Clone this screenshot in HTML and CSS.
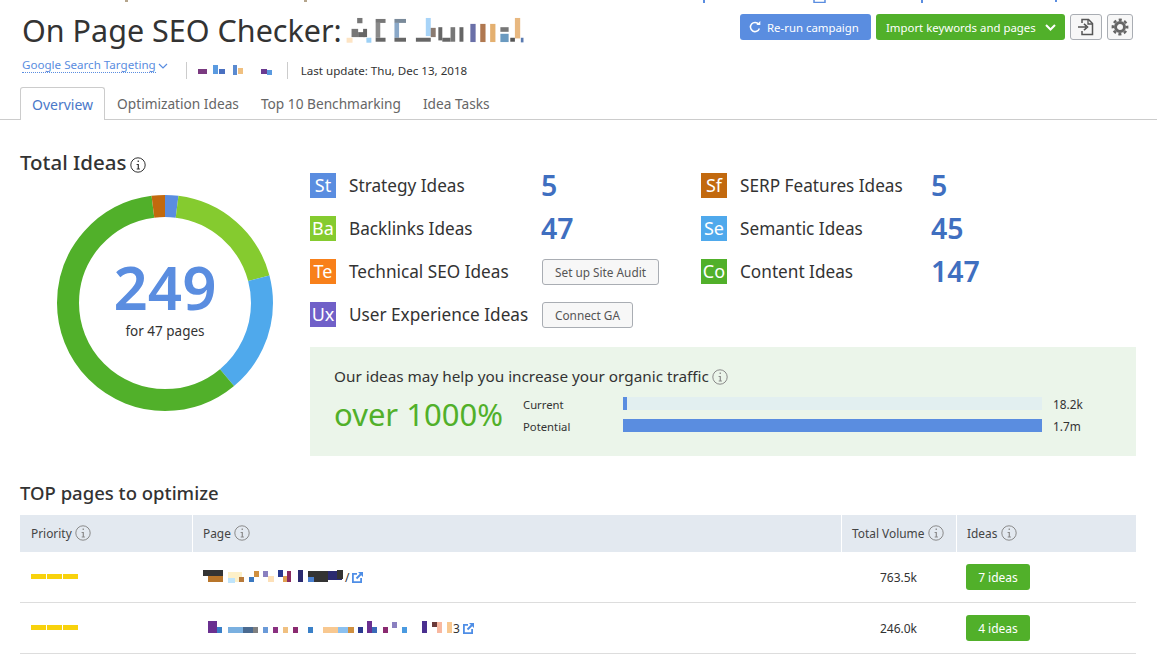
FILE: index.html
```html
<html>

<head>
    <link rel="stylesheet" href="styles.css">
</head>

<body>
    <svg class="hidden-defs">
        <symbol id="info" viewBox="0 0 16 16">
            <circle cx="8" cy="8" r="7.2" fill="none" stroke="currentColor" stroke-width="1"></circle>
            <path d="M7.6 3.6h1.3v1.5H7.6zM6.6 7h2.3v4.6h1v.9H6.7v-.9h1V7.9H6.6z" fill="currentColor"></path>
        </symbol>
        <symbol id="ext" viewBox="0 0 11 11">
            <path d="M0 1h5v1.8H1.8v6.4h6.4V6H10v5H0z" fill="#4f8ee6"></path>
            <path d="M6 0h5v5L9.200 3.200 5.200 7.200 3.800 5.800 7.800 1.800z" fill="#4f8ee6"></path>
        </symbol>
    </svg>

    <svg class="top-strip" width="1157" height="3">
        <rect x="125" y="0" width="3" height="2" fill="#b5a58c"></rect>
        <rect x="304" y="0" width="3" height="2" fill="#b5a58c"></rect>
        <rect x="703" y="0" width="2" height="3" fill="#5a8de0"></rect>
        <path d="M814 0v2.500h11V0" fill="none" stroke="#5a8de0" stroke-width="1.500"></path>
        <rect x="921" y="0" width="2" height="3" fill="#5a8de0"></rect>
        <rect x="1055" y="0" width="2" height="2" fill="#5a8de0"></rect>
    </svg>

    <header class="page-head">
        <div class="title-block">
            <h1 class="title">
                On Page SEO Checker:
                <svg class="blur title-blur" viewBox="0 0 600 100" width="200" height="33">
                    <rect x="52" y="12" width="16" height="16" fill="#777"></rect>
                    <rect x="35" y="45" width="20" height="25" fill="#777"></rect>
                    <rect x="55" y="55" width="20" height="15" fill="#666"></rect>
                    <rect x="70" y="45" width="12" height="25" fill="#666"></rect>
                    <rect x="20" y="72" width="18" height="15" fill="#fde4c4"></rect>
                    <rect x="80" y="72" width="15" height="15" fill="#9cd0f5"></rect>
                    <rect x="108" y="15" width="30" height="12" fill="#777"></rect>
                    <rect x="108" y="27" width="14" height="45" fill="#8a8a8a"></rect>
                    <rect x="108" y="72" width="30" height="12" fill="#666"></rect>
                    <rect x="165" y="15" width="35" height="12" fill="#7a8a9a"></rect>
                    <rect x="165" y="27" width="14" height="45" fill="#8aa8c8"></rect>
                    <rect x="165" y="72" width="35" height="12" fill="#666"></rect>
                    <rect x="260" y="12" width="15" height="55" fill="#a8d4f8"></rect>
                    <rect x="230" y="72" width="45" height="12" fill="#666"></rect>
                    <rect x="275" y="42" width="15" height="28" fill="#8a7a70"></rect>
                    <rect x="298" y="40" width="12" height="40" fill="#666"></rect>
                    <rect x="310" y="72" width="25" height="12" fill="#666"></rect>
                    <rect x="335" y="40" width="14" height="44" fill="#777"></rect>
                    <rect x="362" y="40" width="12" height="44" fill="#666"></rect>
                    <rect x="395" y="30" width="16" height="55" fill="#6a70a8"></rect>
                    <rect x="425" y="30" width="16" height="55" fill="#b07850"></rect>
                    <rect x="455" y="30" width="16" height="55" fill="#e4b070"></rect>
                    <rect x="486" y="40" width="25" height="14" fill="#777"></rect>
                    <rect x="486" y="60" width="25" height="25" fill="#6a9ac0"></rect>
                    <rect x="530" y="12" width="16" height="62" fill="#e8b880"></rect>
                    <rect x="516" y="72" width="14" height="12" fill="#555"></rect>
                    <rect x="548" y="72" width="8" height="14" fill="#5a7ab0"></rect>
                </svg>
            </h1>
            <div class="meta">
                <a class="targeting">Google Search Targeting</a>
                <svg class="targeting-arrow" width="10" height="6" viewBox="0 0 10 6"><path d="M1 1l4 4 4-4" fill="none" stroke="#5a8de0" stroke-width="1.200"></path></svg>
                <span class="meta-sep"></span>
                <svg class="blur meta-blur" width="76" height="12" viewBox="0 0 76 12">
                    <rect x="0" y="5" width="9" height="5" fill="#7a3a80"></rect>
                    <rect x="15" y="1" width="5" height="9" fill="#5a9ae0"></rect>
                    <rect x="21" y="5" width="6" height="5" fill="#4a70c0"></rect>
                    <rect x="35" y="1" width="4" height="10" fill="#5a8ad0"></rect>
                    <rect x="40" y="4" width="5" height="6" fill="#f0c080"></rect>
                    <rect x="63" y="5" width="6" height="5" fill="#6a3a90"></rect>
                    <rect x="69" y="6" width="5" height="5" fill="#5a9ae0"></rect>
                </svg>
                <span class="meta-sep meta-sep-last"></span>
                <span class="updated">Last update: Thu, Dec 13, 2018</span>
            </div>
        </div>
        <div class="actions">
            <button class="btn btn-blue">
                <svg width="12" height="12" viewBox="0 0 12 12"><path d="M9.700 3.200A4.600 4.600 0 1 0 10.400 7.500" fill="none" stroke="#fff" stroke-width="1.500"></path><path d="M7.300 3.900h4V0z" fill="#fff"></path></svg>
                Re-run campaign
            </button>
            <button class="btn btn-green">
                Import keywords and pages
                <svg width="11" height="7" viewBox="0 0 11 7"><path d="M1 1l4.500 4.500L10 1" fill="none" stroke="#fff" stroke-width="2"></path></svg>
            </button>
            <button class="btn-icon btn-file">
                <svg width="18" height="18" viewBox="0 0 18 18"><path d="M5 5V1.500h6.500L15.500 5.500v11H5V13" fill="none" stroke="#555" stroke-width="1.500"></path><path d="M11 1.500V6h4.500" fill="none" stroke="#555" stroke-width="1.300"></path><path d="M1 9h8M7 5.800L10.500 9 7 12.200" fill="none" stroke="#555" stroke-width="1.600"></path></svg>
            </button>
            <button class="btn-icon btn-gear">
                <svg width="18" height="18" viewBox="0 0 18 18"><circle cx="9" cy="9" r="4.500" fill="none" stroke="#666" stroke-width="3"></circle><circle cx="9" cy="9" r="7.200" fill="none" stroke="#666" stroke-width="2.400" stroke-dasharray="3.100 2.550" stroke-dashoffset="1.500"></circle></svg>
            </button>
        </div>
    </header>

    <nav class="tabs">
        <a class="tab tab-active">Overview</a>
        <a class="tab">Optimization Ideas</a>
        <a class="tab">Top 10 Benchmarking</a>
        <a class="tab">Idea Tasks</a>
    </nav>

    <section class="overview">
        <div class="total">
            <h2 class="total-title">Total Ideas <svg class="info info-dark"><use href="#info"></use></svg></h2>
            <div class="donut">
                <svg width="216" height="216" viewBox="0 0 216 216">
                    <g transform="rotate(-90 108 108)" fill="none" stroke-width="22">
                        <circle cx="108" cy="108" r="97" pathLength="249" stroke="#5a8de0" stroke-dasharray="5 244"></circle>
                        <circle cx="108" cy="108" r="97" pathLength="249" stroke="#85cb2f" stroke-dasharray="47 202" stroke-dashoffset="-5"></circle>
                        <circle cx="108" cy="108" r="97" pathLength="249" stroke="#4fa9ec" stroke-dasharray="45 204" stroke-dashoffset="-52"></circle>
                        <circle cx="108" cy="108" r="97" pathLength="249" stroke="#51b02a" stroke-dasharray="147 102" stroke-dashoffset="-97"></circle>
                        <circle cx="108" cy="108" r="97" pathLength="249" stroke="#c2690e" stroke-dasharray="5 244" stroke-dashoffset="-244"></circle>
                    </g>
                </svg>
                <div class="donut-text">
                    <div class="donut-num">249</div>
                    <div class="donut-sub">for 47 pages</div>
                </div>
            </div>
        </div>

        <div class="ideas-col">
            <div class="ideas">
                <div class="idea"><span class="chip chip-st">St</span><span class="idea-name">Strategy Ideas</span><span class="idea-num">5</span></div>
                <div class="idea idea-right"><span class="chip chip-sf">Sf</span><span class="idea-name">SERP Features Ideas</span><span class="idea-num">5</span></div>
                <div class="idea"><span class="chip chip-ba">Ba</span><span class="idea-name">Backlinks Ideas</span><span class="idea-num">47</span></div>
                <div class="idea idea-right"><span class="chip chip-se">Se</span><span class="idea-name">Semantic Ideas</span><span class="idea-num">45</span></div>
                <div class="idea"><span class="chip chip-te">Te</span><span class="idea-name">Technical SEO Ideas</span><button class="btn-plain">Set up Site Audit</button></div>
                <div class="idea idea-right"><span class="chip chip-co">Co</span><span class="idea-name">Content Ideas</span><span class="idea-num">147</span></div>
                <div class="idea"><span class="chip chip-ux">Ux</span><span class="idea-name">User Experience Ideas</span><button class="btn-plain">Connect GA</button></div>
            </div>

            <div class="traffic">
                <div class="traffic-title">Our ideas may help you increase your organic traffic <svg class="info"><use href="#info"></use></svg></div>
                <div class="traffic-body">
                    <div class="traffic-big">over 1000%</div>
                    <div class="bars">
                        <div class="bar-row">
                            <span class="bar-label">Current</span>
                            <span class="bar"><span class="bar-fill" style="width: 1%"></span></span>
                            <span class="bar-val">18.2k</span>
                        </div>
                        <div class="bar-row">
                            <span class="bar-label">Potential</span>
                            <span class="bar"><span class="bar-fill" style="width: 100%"></span></span>
                            <span class="bar-val">1.7m</span>
                        </div>
                    </div>
                </div>
            </div>
        </div>
    </section>

    <section class="top-pages">
        <h2 class="top-title">TOP pages to optimize</h2>
        <div class="table">
            <div class="row row-head">
                <div class="cell">Priority <svg class="info"><use href="#info"></use></svg></div>
                <div class="cell">Page <svg class="info"><use href="#info"></use></svg></div>
                <div class="cell">Total Volume <svg class="info"><use href="#info"></use></svg></div>
                <div class="cell">Ideas <svg class="info"><use href="#info"></use></svg></div>
            </div>
            <div class="row">
                <div class="cell"><span class="prio"><i></i><i></i><i></i></span></div>
                <div class="cell cell-page">
                    <svg class="blur blur-row" width="142" height="14" viewBox="0 0 142 14">
                        <rect x="0" y="0" width="20" height="6" fill="#333"></rect>
                        <rect x="5" y="6" width="15" height="6" fill="#b8752a"></rect>
                        <rect x="25" y="2" width="14" height="10" fill="#fdf0c8"></rect>
                        <rect x="25" y="8" width="7" height="5" fill="#bfe4fb"></rect>
                        <rect x="36" y="7" width="5" height="5" fill="#b87a3a"></rect>
                        <rect x="46" y="7" width="5" height="5" fill="#3a78c0"></rect>
                        <rect x="51" y="1" width="5" height="6" fill="#d09040"></rect>
                        <rect x="60" y="1" width="5" height="6" fill="#8a80c0"></rect>
                        <rect x="65" y="6" width="6" height="6" fill="#fde0b8"></rect>
                        <rect x="75" y="0" width="5" height="7" fill="#2a3a90"></rect>
                        <rect x="80" y="6" width="8" height="6" fill="#e0a050"></rect>
                        <rect x="84" y="1" width="4" height="11" fill="#8a2a60"></rect>
                        <rect x="95" y="0" width="5" height="12" fill="#2a2a70"></rect>
                        <rect x="105" y="1" width="20" height="11" fill="#333"></rect>
                        <rect x="105" y="7" width="6" height="5" fill="#4a80d0"></rect>
                        <rect x="125" y="1" width="14" height="9" fill="#2a2a70"></rect>
                        <rect x="134" y="0" width="6" height="9" fill="#333"></rect>
                    </svg>
                    <span class="page-tail">/</span>
                    <svg class="ext"><use href="#ext"></use></svg>
                </div>
                <div class="cell cell-vol">763.5k</div>
                <div class="cell"><button class="btn-ideas">7 ideas</button></div>
            </div>
            <div class="row">
                <div class="cell"><span class="prio"><i></i><i></i><i></i></span></div>
                <div class="cell cell-page">
                    <svg class="blur blur-row" width="250" height="14" viewBox="0 0 250 14">
                        <rect x="5" y="0" width="9" height="12" fill="#6a3090"></rect>
                        <rect x="14" y="6" width="5" height="6" fill="#3a80c8"></rect>
                        <rect x="25" y="6" width="15" height="6" fill="#7ab0e0"></rect>
                        <rect x="40" y="6" width="10" height="6" fill="#4a6a90"></rect>
                        <rect x="50" y="6" width="5" height="6" fill="#808080"></rect>
                        <rect x="60" y="6" width="5" height="6" fill="#6a9ad8"></rect>
                        <rect x="70" y="6" width="5" height="6" fill="#8a3080"></rect>
                        <rect x="80" y="6" width="5" height="6" fill="#f0c080"></rect>
                        <rect x="90" y="6" width="5" height="6" fill="#8a2a70"></rect>
                        <rect x="105" y="6" width="5" height="6" fill="#3a80c8"></rect>
                        <rect x="120" y="6" width="15" height="6" fill="#f8c890"></rect>
                        <rect x="135" y="6" width="10" height="6" fill="#8ac0f0"></rect>
                        <rect x="145" y="6" width="6" height="6" fill="#d09040"></rect>
                        <rect x="155" y="6" width="5" height="6" fill="#2a3a90"></rect>
                        <rect x="164" y="0" width="5" height="12" fill="#6a3090"></rect>
                        <rect x="169" y="6" width="5" height="6" fill="#3a6ab8"></rect>
                        <rect x="180" y="6" width="5" height="6" fill="#8a2a70"></rect>
                        <rect x="189" y="1" width="5" height="6" fill="#8a80c0"></rect>
                        <rect x="199" y="6" width="5" height="6" fill="#4a9ae0"></rect>
                        <rect x="219" y="0" width="5" height="12" fill="#4a3090"></rect>
                        <rect x="229" y="1" width="5" height="5" fill="#6a3a3a"></rect>
                        <rect x="234" y="1" width="5" height="11" fill="#f8b8a0"></rect>
                        <rect x="244" y="1" width="5" height="11" fill="#f8c890"></rect>
                    </svg>
                    <span class="page-tail">3</span>
                    <svg class="ext"><use href="#ext"></use></svg>
                </div>
                <div class="cell cell-vol">246.0k</div>
                <div class="cell"><button class="btn-ideas">4 ideas</button></div>
            </div>
        </div>
    </section>
</body>

</html>
```

FILE: styles.css
```css
body {
    margin: 0;
    background: #fff;
    color: #333;
    font-family: 'Noto Sans', 'Open Sans', sans-serif;
    font-size: 14px;
    overflow: hidden;
}

.hidden-defs {
    display: none;
}

.top-strip {
    display: block;
}

.blur {
    filter: blur(0.5px);
}

.blur-row {
    filter: blur(0.7px);
}

.info {
    width: 16px;
    height: 16px;
    color: #8a8a8a;
    vertical-align: -3px;
}

.info-dark {
    color: #333;
    margin-left: -2px;
}

.page-head {
    display: flex;
    justify-content: space-between;
    padding: 10px 24px 0 22px;
}

.title {
    display: flex;
    align-items: center;
    height: 33px;
    margin: 0;
    font-size: 30.500px;
    font-weight: 400;
    white-space: nowrap;
}

.title-blur {
    margin: 2px 0 0 -3px;
}

.meta {
    display: flex;
    align-items: center;
    height: 20px;
    margin-top: 14px;
    font-size: 11.600px;
}

.targeting {
    color: #5a8de0;
    border-bottom: 1px dotted #5a8de0;
    line-height: 14px;
    margin-top: -9px;
}

.targeting-arrow {
    margin: -8px 0 0 2px;
}

.meta-sep {
    width: 1px;
    height: 17px;
    margin: 0 11px 0 18px;
    background: #ccc;
}

.meta-sep-last {
    margin: 0 13px 0 13px;
}

.updated {
    color: #333;
}

.actions {
    display: flex;
    gap: 5px;
    height: 26px;
    margin-top: 1px;
}

.btn,
.btn-icon,
.btn-plain,
.btn-ideas {
    font-family: inherit;
    cursor: pointer;
    padding: 0;
}

.btn {
    display: flex;
    align-items: center;
    height: 26px;
    border: 0;
    border-radius: 3px;
    color: #fff;
    font-size: 11.400px;
}

.btn-blue {
    width: 131px;
    padding-left: 9px;
    gap: 6px;
    background: #5a8de0;
}

.btn-green {
    width: 189px;
    padding: 0 9px 0 10px;
    justify-content: space-between;
    background: #51b02a;
}

.btn-icon {
    display: flex;
    align-items: center;
    justify-content: center;
    height: 26px;
    background: #f7f7f7;
    border: 1px solid #a9adb3;
    border-radius: 3px;
}

.btn-file {
    width: 32px;
}

.btn-gear {
    width: 26px;
}

.tabs {
    display: flex;
    height: 32px;
    margin-top: 7px;
    padding-left: 20px;
    border-bottom: 1px solid #ccc;
    font-size: 13.700px;
}

.tab {
    height: 32px;
    padding: 0 11px;
    line-height: 34px;
    color: #666;
}

.tab-active {
    height: 32px;
    margin-right: 1px;
    color: #4a78c8;
    background: #fff;
    border: 1px solid #ccc;
    border-bottom: 0;
    border-radius: 3px 3px 0 0;
    font-size: 14px;
    line-height: 33px;
}

.overview {
    display: flex;
    padding: 30px 21px 0 20px;
}

.total {
    width: 290px;
    flex: none;
}

.total-title {
    margin: 0;
    font-size: 20.500px;
    font-weight: 500;
    line-height: 24px;
}

.donut {
    position: relative;
    width: 216px;
    height: 216px;
    margin: 21px 0 0 37px;
}

.donut svg {
    display: block;
}

.donut-text {
    position: absolute;
    inset: 0;
    text-align: center;
}

.donut-num {
    margin-top: 62px;
    font-size: 60px;
    font-weight: 600;
    line-height: 60px;
    color: #5a8de0;
}

.donut-sub {
    margin-top: 5px;
    font-size: 13.500px;
    line-height: 18px;
}

.ideas-col {
    flex: 1;
    padding-top: 23px;
}

.ideas {
    display: grid;
    grid-template-columns: 391px 1fr;
    grid-auto-rows: 43px;
}

.idea {
    display: flex;
    align-items: flex-start;
}

.chip {
    width: 26px;
    height: 25px;
    flex: none;
    color: #fff;
    font-size: 18px;
    line-height: 25px;
    text-align: center;
}

.chip-st {
    background: #5a8de0;
}

.chip-sf {
    background: #c2690e;
}

.chip-ba {
    background: #85cb2f;
}

.chip-se {
    background: #4fa9ec;
}

.chip-te {
    background: #f8801a;
}

.chip-co {
    background: #51b02a;
}

.chip-ux {
    background: #7060c8;
}

.idea-name {
    width: 193px;
    flex: none;
    margin-left: 13px;
    font-size: 17.200px;
    line-height: 26px;
    white-space: nowrap;
}

.idea-right .idea-name {
    width: 192px;
}

.idea-num {
    margin-left: -1px;
    font-size: 28.500px;
    font-weight: 600;
    line-height: 25px;
    color: #3f6fc0;
}

.btn-plain {
    height: 26px;
    padding: 0 12px;
    background: #f7f7f7;
    border: 1px solid #a9adb3;
    border-radius: 3px;
    color: #555;
    font-size: 11.800px;
}

.traffic {
    height: 109px;
    margin-top: 2px;
    padding: 19px 24px 0;
    box-sizing: border-box;
    background: #ebf5ea;
}

.traffic-title {
    font-size: 15.300px;
    line-height: 20px;
}

.traffic-title .info {
    margin-left: -1px;
}

.traffic-body {
    display: flex;
    align-items: center;
    margin-top: 6px;
}

.traffic-big {
    width: 189px;
    flex: none;
    color: #51b02a;
    font-size: 31px;
    white-space: nowrap;
}

.bars {
    flex: 1;
}

.bar-row {
    display: flex;
    align-items: center;
    height: 22px;
    font-size: 11.300px;
}

.bar-label {
    width: 100px;
    margin-top: 2px;
}

.bar {
    display: block;
    width: 419px;
    height: 13px;
    background: #e2eff0;
}

.bar-fill {
    display: block;
    height: 100%;
    background: #5a8de0;
    min-width: 4px;
}

.bar-val {
    margin: 2px 0 0 11px;
    font-size: 11.800px;
}

.top-pages {
    padding: 26px 21px 0 20px;
}

.top-title {
    margin: 0 0 11px;
    font-size: 18.500px;
    font-weight: 500;
    line-height: 22px;
}

.row {
    display: grid;
    grid-template-columns: 173px 649px 115px 1fr;
    height: 51px;
    align-items: center;
    border-bottom: 1px solid #ddd;
    box-sizing: border-box;
}

.row-head {
    height: 37px;
    border-bottom: 0;
    background: #e3e9f0;
    color: #444;
}

.row-head .cell {
    height: 37px;
    padding-left: 10px;
    font-size: 11.900px;
    line-height: 37px;
    border-right: 1px solid #fff;
    box-sizing: border-box;
}

.row-head .cell:first-child {
    padding-left: 11px;
}

.row-head .cell:last-child {
    border-right: 0;
}

.cell {
    padding-left: 11px;
    font-size: 12px;
}

.cell-page {
    display: flex;
    align-items: center;
    padding-left: 10px;
}

.page-tail {
    font-size: 12px;
}

.ext {
    width: 11px;
    height: 11px;
    margin-left: 3px;
}

.cell-vol {
    padding-left: 0;
    padding-right: 40px;
    text-align: right;
}

.prio {
    display: flex;
    gap: 1px;
    margin-bottom: 1px;
}

.prio i {
    width: 15px;
    height: 5px;
    background: #f8d20c;
}

.btn-ideas {
    display: block;
    width: 64px;
    height: 26px;
    margin-left: -2px;
    border: 0;
    border-radius: 3px;
    background: #51b02a;
    color: #fff;
    font-size: 12px;
}
```
